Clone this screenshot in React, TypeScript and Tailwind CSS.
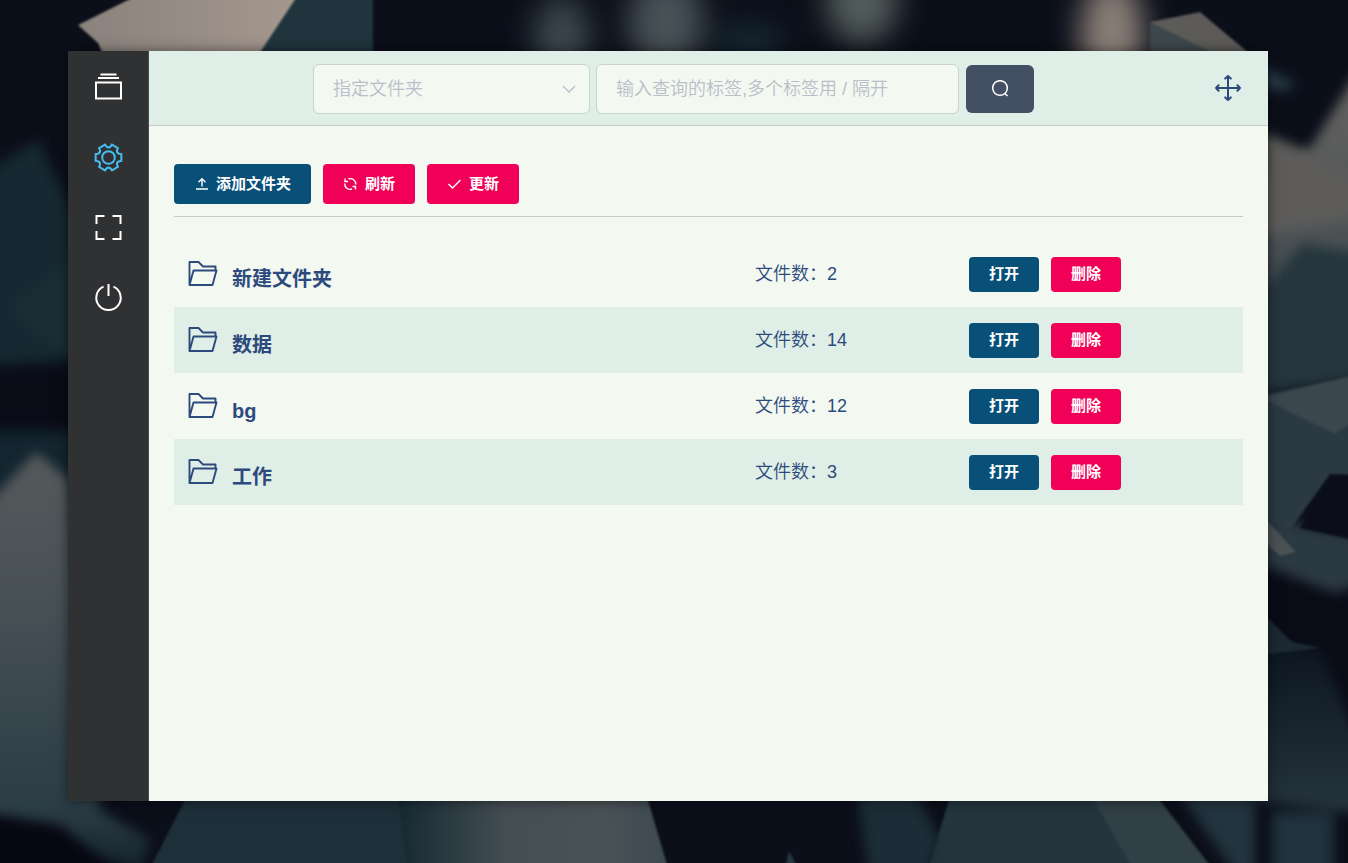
import React from "react";

type Folder = { name: string; count: number };

const folders: Folder[] = [
  { name: "新建文件夹", count: 2 },
  { name: "数据", count: 14 },
  { name: "bg", count: 12 },
  { name: "工作", count: 3 },
];

function Backdrop() {
  return (
    <svg
      className="absolute inset-0 -z-10 h-full w-full"
      viewBox="0 0 1348 863"
      preserveAspectRatio="xMidYMid slice"
      aria-hidden="true"
      colorInterpolationFilters="sRGB"
    >
      <defs>
        <filter id="crisp" x="-50%" y="-50%" width="200%" height="200%"><feGaussianBlur stdDeviation="1" /></filter>
        <filter id="soft" x="-50%" y="-50%" width="200%" height="200%"><feGaussianBlur stdDeviation="6" /></filter>
        <filter id="haze" x="-100%" y="-100%" width="300%" height="300%"><feGaussianBlur stdDeviation="15" /></filter>
        <linearGradient id="slab" x1="0" y1="0" x2="0" y2="1">
          <stop offset="0" stopColor="#555a5b" />
          <stop offset="0.35" stopColor="#485156" />
          <stop offset="0.85" stopColor="#2b3d46" />
          <stop offset="1" stopColor="#14232d" />
        </linearGradient>
        <linearGradient id="column" x1="0" y1="0" x2="1" y2="0">
          <stop offset="0" stopColor="#152932" />
          <stop offset="0.4" stopColor="#444e53" />
          <stop offset="0.75" stopColor="#495257" />
          <stop offset="1" stopColor="#3e4a51" />
        </linearGradient>
        <linearGradient id="sand" x1="0" y1="0" x2="1" y2="0">
          <stop offset="0" stopColor="#8a827d" />
          <stop offset="1" stopColor="#a5988e" />
        </linearGradient>
        <linearGradient id="stone" x1="0" y1="0" x2="0" y2="1">
          <stop offset="0" stopColor="#666361" />
          <stop offset="0.6" stopColor="#535758" />
          <stop offset="1" stopColor="#354349" />
        </linearGradient>
        <linearGradient id="depth" x1="0" y1="0" x2="0" y2="1">
          <stop offset="0" stopColor="#0c1620" />
          <stop offset="1" stopColor="#25343e" />
        </linearGradient>
      </defs>
      <rect width="1348" height="863" fill="#0b0f1a" />
      <g filter="url(#haze)">
        <ellipse cx="562" cy="38" rx="28" ry="42" fill="#3c484e" />
        <ellipse cx="666" cy="22" rx="38" ry="50" fill="#475156" />
        <ellipse cx="750" cy="45" rx="35" ry="22" fill="#172831" />
        <ellipse cx="862" cy="0" rx="36" ry="44" fill="#525c5a" />
        <ellipse cx="1112" cy="36" rx="32" ry="60" fill="#8a7f78" />
      </g>
      <g filter="url(#soft)">
        <polygon points="-20,175 38,140 75,215 75,360 -20,365" fill="#162831" />
        <polygon points="10,310 75,255 75,362" fill="#1b2e36" />
        <rect x="-20" y="374" width="100" height="50" fill="#090c17" />
        <rect x="-20" y="432" width="100" height="80" fill="#13252f" />
        <polygon points="-20,512 36,452 70,480 100,810 150,840 140,870 -20,815" fill="url(#slab)" />
        <polygon points="-20,812 60,825 130,880 -20,880" fill="#060712" />
        <polygon points="1262,65 1296,84 1284,92 1262,88" fill="#263944" />
        <polygon points="1262,185 1310,148 1365,60 1365,256 1302,245 1262,310" fill="url(#stone)" />
        <polygon points="1250,310 1302,243 1365,254 1365,378 1250,395" fill="#26363e" />
        <polygon points="1262,515 1365,538 1365,582 1330,595 1262,565" fill="#2b3942" />
        <polygon points="1262,565 1365,605 1365,740 1262,700" fill="#090c17" />
        <polygon points="1250,645 1320,650 1365,755 1365,814 1250,800" fill="url(#depth)" />
        <rect x="1272" y="812" width="62" height="70" fill="#20323c" />
      </g>
      <g filter="url(#crisp)">
        <polygon points="138,-5 298,-5 258,70 110,70 98,43 78,25" fill="url(#sand)" />
        <polygon points="298,-5 373,-5 373,60 255,60" fill="#20343d" />
        <polygon points="1150,22 1200,12 1250,54 1150,54" fill="#5c5b59" />
        <polygon points="1150,22 1215,54 1150,54" fill="#3e484c" />
        <polygon points="1262,395 1355,375 1355,475 1330,474 1290,530 1262,520" fill="#2b3a42" />
        <polygon points="1262,398 1335,434 1355,420 1355,375" fill="#3a474d" />
        <polygon points="1300,528 1334,476 1355,480 1355,540" fill="#0b0e1a" />
        <polygon points="1262,515 1296,552 1280,556 1262,540" fill="#4a5255" />
        <polygon points="1262,612 1292,642 1320,648 1262,655" fill="#1c2933" />
        <polygon points="190,790 398,790 408,868 150,868" fill="#1d2f39" />
        <polygon points="398,790 645,790 668,868 408,868" fill="url(#column)" />
        <polygon points="952,790 1090,790 1132,868 928,868" fill="#24353e" />
        <polygon points="1088,790 1152,790 1212,868 1132,868" fill="#313f46" />
        <polygon points="785,868 789,851 798,868" fill="#26363f" />
      </g>
      <g filter="url(#soft)">
        <polygon points="1262,132 1310,152 1365,185 1365,215 1262,235" fill="#5d5c5b" />
        <polygon points="855,780 910,780 940,840 925,880 870,880" fill="#1c2d37" />
        <polygon points="1170,780 1255,780 1255,880 1240,880" fill="#22343e" />
      </g>
    </svg>
  );
}

type IconProps = { className?: string; children: React.ReactNode; box?: string; width?: number };

function Icon({ className = "", children, box = "0 0 30 30", width = 2 }: IconProps) {
  return (
    <svg className={className} viewBox={box} fill="none" stroke="currentColor" strokeWidth={width} aria-hidden="true">
      {children}
    </svg>
  );
}

function FolderIcon() {
  return (
    <Icon className="size-[30px] shrink-0" width={1.9}>
      <path d="M1.500 26V3h9l4.500 4.500h12.500V11.500M1.500 26 5.500 11.500h23L24.500 26Z" strokeLinejoin="round" />
    </Icon>
  );
}

function polar(radius: number, degrees: number) {
  const a = (degrees * Math.PI) / 180;
  return `${(15.5 + radius * Math.cos(a)).toFixed(2)} ${(14.5 + radius * Math.sin(a)).toFixed(2)}`;
}

// Six flat teeth joined by shallow concave notches.
const gearPath =
  [0, 60, 120, 180, 240, 300]
    .map(
      (a, i) =>
        `${i === 0 ? "M" : "L"}${polar(13.3, a - 15)}L${polar(13.3, a + 15)}L${polar(11.3, a + 19)}Q${polar(9.2, a + 30)} ${polar(11.3, a + 41)}`
    )
    .join("") + "Z";

const navItems = [
  {
    label: "文件",
    active: false,
    icon: <path d="M7.500 1.500h16M5 5h21M3 9.500h25v16H3Z" />,
  },
  {
    label: "设置",
    active: true,
    icon: (
      <>
        <circle cx="15.500" cy="14.500" r="6.300" />
        <path d={gearPath} />
      </>
    ),
  },
  {
    label: "全屏",
    active: false,
    icon: <path d="M3.500 11V3h8M19.500 3h8v8M27.500 18v8h-8M11.500 26h-8v-8" />,
  },
  {
    label: "退出",
    active: false,
    icon: <path d="M15.500 1v12M10.500 3.700a12.200 12.200 0 1 0 10 0" />,
  },
];

const actionClass =
  "flex h-10 items-center gap-2 rounded-[4px] px-5 text-[15px] font-bold text-white";
const rowButtonClass = "h-[35px] w-[70px] rounded-[4px] text-[15px] font-bold text-white";

export default function App() {
  return (
    <div className="relative isolate flex min-h-screen overflow-hidden pt-[51px] pr-20 pb-[62px] pl-[68px] font-['Liberation_Sans','Noto_Sans_CJK_SC',sans-serif] text-[#2c4a7c]">
      <Backdrop />
      <div className="flex flex-1 shadow-[0_0_12px_rgba(0,0,0,0.5)]">
        <nav className="flex w-[81px] shrink-0 flex-col border-r border-[#494b4d] bg-[#303133] pt-0.5">
          {navItems.map((item) => (
            <button
              key={item.label}
              aria-label={item.label}
              className={
                item.active
                  ? "flex h-[70px] items-center justify-center text-[#45bdf0]"
                  : "flex h-[70px] items-center justify-center text-white"
              }
            >
              <Icon className="size-[30px]">{item.icon}</Icon>
            </button>
          ))}
        </nav>

        <main className="min-w-0 flex-1 bg-[#f3f8f1]">
          <header className="flex h-[75px] items-center border-b border-[#c5cfcb] bg-[#dfeee6] pt-0.5 pr-[26px] pl-[164px]">
            <form className="flex items-center" onSubmit={(e) => e.preventDefault()}>
              <div className="relative w-[277px]">
                <select
                  aria-label="指定文件夹"
                  defaultValue=""
                  className="h-[50px] w-full appearance-none rounded-md border border-[#c9d3ce] bg-[#f3f8f1] px-[19px] text-lg font-[350] text-[#b9bfc8] outline-none"
                >
                  <option value="">指定文件夹</option>
                  {folders.map((f) => (
                    <option key={f.name}>{f.name}</option>
                  ))}
                </select>
                <Icon className="pointer-events-none absolute top-4 right-3 size-[18px] text-[#b9bfc8]" box="0 0 18 18" width={1.3}>
                  <path d="m3 6 6 6 6-6" />
                </Icon>
              </div>
              <input
                aria-label="查询标签"
                placeholder="输入查询的标签,多个标签用 / 隔开"
                className="ml-1.5 h-[50px] w-[363px] rounded-md border border-[#c9d3ce] bg-[#f3f8f1] px-[19px] text-lg font-[350] outline-none placeholder:text-[#b9bfc8]"
              />
              <button aria-label="查询" className="ml-[7px] flex h-12 w-[68px] items-center justify-center rounded-md bg-[#434f65] text-white">
                <Icon className="size-[18px]" box="0 0 18 18" width={1.5}>
                  <circle cx="9" cy="8" r="7.300" />
                  <path d="m13.500 13 3 3" />
                </Icon>
              </button>
            </form>
            <button aria-label="移动" className="ml-auto">
              <Icon className="size-7" box="0 0 28 28" width={2}>
                <path d="M14 1v24M2 13h24M11.200 3.600 14 1l2.800 2.600M11.200 22.400 14 25l2.800-2.600M4.600 10.200 2 13l2.600 2.800M23.400 10.200 26 13l-2.600 2.800" strokeLinecap="round" strokeLinejoin="round" />
              </Icon>
            </button>
          </header>

          <section className="px-[25px] pt-[38px]">
            <div className="flex gap-3 border-b border-[#c5cac5] pb-3">
              <button className={`${actionClass} bg-[#085078]`}>
                <Icon className="size-[14px]" box="0 0 14 14" width={1.4}>
                  <path d="M2 12h12M8 9.500V2M4.500 5.300 8 1.800l3.500 3.500" />
                </Icon>
                添加文件夹
              </button>
              <button className={`${actionClass} bg-[#f00056]`}>
                <Icon className="size-[14px]" box="0 0 14 14" width={1.4}>
                  <path d="M2 1.500v3h3M5.500 2a5.300 5.300 0 0 1 7.200 5.500M1.800 6.500A5.300 5.300 0 0 0 9 12M12.500 12.500v-3h-3" />
                </Icon>
                刷新
              </button>
              <button className={`${actionClass} bg-[#f00056]`}>
                <Icon className="size-[14px]" box="0 0 14 14" width={1.4}>
                  <path d="m1.500 7 4 4L13.500 3" />
                </Icon>
                更新
              </button>
            </div>

            <ul className="mt-6">
              {folders.map((folder) => (
                <li
                  key={folder.name}
                  className="grid h-[66px] grid-cols-[581fr_214fr_274fr] items-center even:bg-[#dfeee6]"
                >
                  <div className="flex items-center gap-[14px] pl-[14px]">
                    <FolderIcon />
                    <span className="pt-2.5 text-xl leading-7 font-bold">{folder.name}</span>
                  </div>
                  <span className="text-lg font-[350]">文件数：{folder.count}</span>
                  <div className="flex gap-3">
                    <button className={`${rowButtonClass} bg-[#085078]`}>打开</button>
                    <button className={`${rowButtonClass} bg-[#f00056]`}>删除</button>
                  </div>
                </li>
              ))}
            </ul>
          </section>
        </main>
      </div>
    </div>
  );
}
